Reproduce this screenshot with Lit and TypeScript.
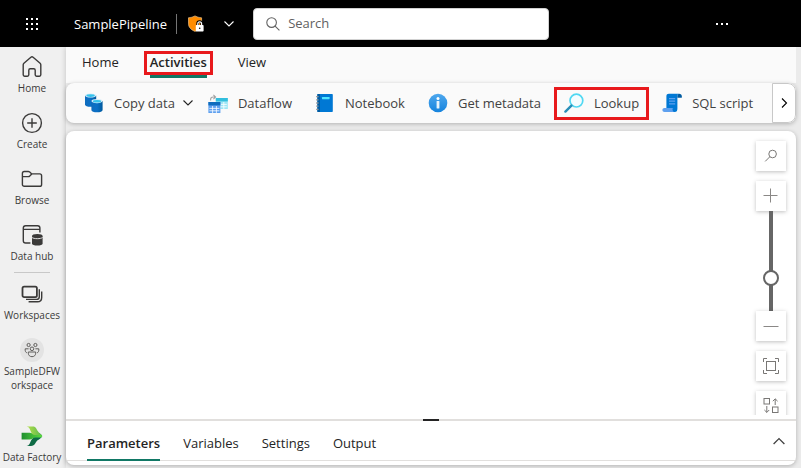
import { LitElement, html, css, svg, nothing } from "lit";
import { customElement, property, state } from "lit/decorators.js";
import { classMap } from "lit/directives/class-map.js";

const resets = css`
  * {
    box-sizing: border-box;
  }
  button {
    margin: 0;
    padding: 0;
    border: 0;
    background: none;
    color: inherit;
    font: inherit;
    cursor: pointer;
  }
  svg {
    display: block;
    flex: none;
  }
`;

const waffle = html`<svg width="14" height="14" viewBox="0 0 14 14" fill="#fff">
  ${[1, 6, 11].map((y) => [1, 6, 11].map((x) => svg`<rect x=${x} y=${y} width="2" height="2" />`))}
</svg>`;

const shield = html`<svg width="16" height="18" viewBox="0 0 16 18">
  <path d="M7 0.9C9 2 11 2.6 13.6 2.8V8.2C13.6 12 11.4 14.6 7 16.4C2.6 14.6 0.4 12 0.4 8.2V2.8C3 2.6 5 2 7 0.9Z" fill="#ff8c00" stroke="#fbd7a4" stroke-width="0.6" />
  <path d="M9.6 10V8.6a2 2 0 0 1 4 0V10" fill="none" stroke="#000" stroke-width="2.6" />
  <path d="M9.8 11V8.8a1.9 1.9 0 0 1 3.8 0V11" fill="none" stroke="#fff" stroke-width="1.2" />
  <rect x="7.8" y="10" width="7.8" height="6.6" rx="0.8" fill="#fff" />
  <circle cx="11.7" cy="13.2" r="0.8" fill="#000" />
</svg>`;

const chevron = (d: "down" | "up" | "right", size = 10) => {
  const paths = { down: "M0.5 2.5L5 7L9.5 2.5", up: "M0.5 7.5L5 3L9.5 7.5", right: "M3 0.5L7.5 5L3 9.5" };
  return html`<svg width=${size} height=${size} viewBox="0 0 10 10" fill="none" stroke="currentColor" stroke-width="1.1">
    <path d=${paths[d]} />
  </svg>`;
};

const searchGlyph = html`<svg width="14" height="14" viewBox="0 0 14 14" fill="none" stroke="#616161" stroke-width="1.1">
  <circle cx="5.6" cy="5.6" r="4.8" />
  <path d="M9.1 9.1L13.4 13.4" />
</svg>`;

const lineIcon = (body: unknown) => html`<svg width="22" height="22" viewBox="0 0 22 22" fill="none" stroke="#3b3a39" stroke-width="1.4" stroke-linejoin="round">
  ${body}
</svg>`;

const navIcons = {
  home: lineIcon(svg`<path d="M2.2 8.7C2.2 8.1 2.5 7.6 2.9 7.2L9.9 1.3C10.5 0.8 11.5 0.8 12.1 1.3L19.1 7.2C19.5 7.6 19.8 8.1 19.8 8.7V18.8C19.8 19.6 19.2 20.2 18.4 20.2H15.6C14.8 20.2 14.2 19.6 14.2 18.8V14.2C14.2 13.4 13.6 12.8 12.8 12.8H9.2C8.4 12.8 7.8 13.4 7.8 14.2V18.8C7.8 19.6 7.2 20.2 6.4 20.2H3.6C2.8 20.2 2.2 19.6 2.2 18.8Z" />`),
  create: lineIcon(svg`<circle cx="11" cy="11" r="9.4" /><path d="M11 6.2V15.8M6.2 11H15.8" />`),
  browse: lineIcon(svg`<path d="M1.4 5.4C1.4 4.3 2.2 3.5 3.3 3.5H7.3C7.8 3.5 8.3 3.7 8.7 4L10.8 5.9H18.7C19.8 5.9 20.6 6.7 20.6 7.8V16.4C20.6 17.5 19.8 18.3 18.7 18.3H3.3C2.2 18.3 1.4 17.5 1.4 16.4ZM1.4 8.6H7.4C7.9 8.6 8.3 8.4 8.7 8.1L10.8 5.9" />`),
  hub: lineIcon(svg`<path d="M9.4 19H4.6C3.3 19 2.3 18 2.3 16.7V4C2.3 2.7 3.3 1.7 4.6 1.7H16.6C17.9 1.7 18.9 2.7 18.9 4V8.4M2.3 5.4H18.9" />
    <path d="M11 12.2V19.4C11 20.7 13.4 21.6 16.3 21.6S21.6 20.7 21.6 19.4V12.2Z" fill="#3b3a39" stroke="none" />
    <ellipse cx="16.3" cy="12" rx="5.3" ry="2" fill="#3b3a39" stroke="none" />
    <path d="M11 13.4C12.5 15.1 20.1 15.1 21.6 13.4" stroke="#f0f0f0" stroke-width="0.9" />`),
  workspaces: lineIcon(svg`<rect x="1.5" y="3.6" width="14.4" height="10.6" rx="1.6" stroke-width="1.8" />
    <path d="M5 16.4H15.6C17.2 16.4 18.3 15.3 18.3 13.7V6.2M7.6 18.7H16.4C19 18.7 20.7 17 20.7 14.4V8.6" />`),
  team: html`<svg width="24" height="24" viewBox="0 0 24 24" fill="none" stroke="#605e5c" stroke-width="1">
    <circle cx="12" cy="12" r="12" fill="#e3e3e3" stroke="none" />
    <circle cx="8.6" cy="7" r="1.6" /><circle cx="15.4" cy="7" r="1.6" /><circle cx="12" cy="10.8" r="1.8" />
    <path d="M8.3 14H15.7V15.2C15.7 17.2 14.2 18.7 12 18.7S8.3 17.2 8.3 15.2ZM5.2 10.8H8.6M15.4 10.8H18.8M5.2 10.8C5 13 5.6 14.4 6.8 14.8M18.8 10.8C19 13 18.4 14.4 17.2 14.8" />
  </svg>`,
  factory: html`<svg width="22" height="20" viewBox="0 0 22 20">
    <defs>
      <linearGradient id="leaf" x1="0" x2="1"><stop offset="0" stop-color="#b5e04a" /><stop offset="1" stop-color="#5cb84e" /></linearGradient>
      <linearGradient id="stem" x1="0" x2="1"><stop offset="0" stop-color="#1f8f2f" /><stop offset="1" stop-color="#5ddb3f" /></linearGradient>
    </defs>
    <path d="M12 7H18.4L20.8 9.2C21.3 9.7 21.3 10.4 20.8 10.9L18 13.4H12Z" fill="#127a6b" />
    <path d="M5.6 20C8 19.8 8.6 18 9.6 15.6C10.6 13.2 11.6 11.4 14 11.4H20.2L17.6 13.6C15.6 15.2 15 16 14.2 17.6C13.4 19.2 12 20 10 20Z" fill="#0f6b45" />
    <path d="M0.6 6.8H8.6C11 6.8 12 8.2 14.4 8.2H19.6L20.8 9.2C21.3 9.7 21.3 10.4 20.8 10.9L20.2 11.4H14.4C12 11.4 11.4 13.4 8.6 13.4H0.6Z" fill="url(#stem)" />
    <path d="M5.6 0.4H11.4C13.6 0.4 14.6 1 15.4 2.8C16.2 4.6 17 5.6 19 7.6L20.6 9.1H15C11.6 9.1 10.4 7 9.4 4.4C8.6 2.4 7.8 0.6 5.6 0.4Z" fill="url(#leaf)" />
  </svg>`,
};

const color = (body: unknown) => html`<svg width="20" height="20" viewBox="0 0 20 20">${body}</svg>`;

const can = (x: number, y: number) => svg`
  <path d="M${x} ${y + 2}V${y + 11}C${x} ${y + 12.4} ${x + 2.5} ${y + 13.3} ${x + 5.6} ${y + 13.3}S${x + 11.2} ${y + 12.4} ${x + 11.2} ${y + 11}V${y + 2}Z" fill="url(#can)" />
  <ellipse cx=${x + 5.6} cy=${y + 2.1} rx="5.6" ry="2.1" fill="#d5ecf9" />
  <ellipse cx=${x + 5.6} cy=${y + 2.2} rx="4.2" ry="1.3" fill="#35c3ec" />`;

const grid = (x: number, y: number, head: string, body: string) => svg`
  <rect x=${x} y=${y} width="12" height="11" fill=${body} />
  <rect x=${x} y=${y} width="12" height="3.4" fill=${head} />
  <path d="M${x + 4.2} ${y + 4}V${y + 11}M${x + 8} ${y + 4}V${y + 11}M${x + 1} ${y + 6.4}H${x + 11}M${x + 1} ${y + 8.8}H${x + 11}" stroke="#fff" stroke-width="0.8" />`;

const toolIcons = {
  copy: color(svg`
    <defs><linearGradient id="can" x1="0" x2="1"><stop offset="0" stop-color="#0f6cbd" /><stop offset="0.5" stop-color="#0a6fc6" /><stop offset="1" stop-color="#005a9e" /></linearGradient></defs>
    ${can(1, 0.4)}
    ${can(7.4, 6)}`),
  dataflow: color(svg`
    ${grid(7.8, 5, "#32bedd", "#9be6f5")}
    ${grid(0.4, 9, "#0f6cbd", "#5ea0ef")}
    <path d="M2.6 7.4V6.4C2.6 4.8 3.6 4 5.2 4H7.4M5.4 1.8L7.6 4L5.4 6.2" fill="none" stroke="#a3a3a3" stroke-width="1.1" />`),
  notebook: color(svg`
    <rect x="2.4" y="1" width="15.4" height="18" rx="0.8" fill="#0078d4" />
    <rect x="2.4" y="1" width="2.6" height="18" fill="#005ba1" />
    <rect x="7" y="4" width="7.6" height="2.2" rx="0.4" fill="#50e6ff" />
    <path d="M1.2 3.6H3.6M1.2 6.8H3.6M1.2 10H3.6M1.2 13.2H3.6M1.2 16.4H3.6" stroke="#8a9299" stroke-width="1.3" />`),
  info: color(svg`
    <defs><linearGradient id="info" x2="0" y2="1"><stop offset="0" stop-color="#4fa8ee" /><stop offset="1" stop-color="#1583dd" /></linearGradient></defs>
    <circle cx="10" cy="10" r="9.3" fill="url(#info)" />
    <circle cx="10" cy="5.6" r="1.5" fill="#fff" />
    <rect x="8.6" y="8" width="2.8" height="7.6" rx="0.6" fill="#e8f4fd" />`),
  lookup: color(svg`
    <circle cx="12.4" cy="7.6" r="6.4" fill="#f4fdff" stroke="#50d8f2" stroke-width="1.7" />
    <path d="M7.4 12.6L1.4 18.6" stroke="#2a8fb8" stroke-width="2.4" stroke-linecap="round" />`),
  script: color(svg`
    <path d="M4.4 17V3.2C4.4 1.6 5.4 0.8 6.8 0.8H17.2C15.8 1 15.4 2 15.4 3.4V15.4C15.4 17.6 14.6 19 12.8 19H4Z" fill="#0078d4" />
    <path d="M17.2 0.8C18.8 0.8 19.8 1.8 19.8 3.2V4.8H15.4V3.2C15.4 1.8 16 0.8 17.2 0.8Z" fill="#005ba1" />
    <path d="M7 5.6H13.2M7 8.2H13.2M7 10.8H13.2" stroke="#5ea0ef" stroke-width="1.2" />
    <path d="M2.6 15H11.6C10.4 15.4 10.4 16 10.6 17C10.8 18.2 11.4 19 12.8 19H2.6C1.2 19 0.4 18.2 0.4 17S1.2 15 2.6 15Z" fill="#5ea0ef" />`),
};

const thin = (body: unknown) => html`<svg width="16" height="16" viewBox="0 0 16 16" fill="none" stroke="#797775" stroke-width="1">${body}</svg>`;

const canvasIcons = {
  find: thin(svg`<circle cx="9.6" cy="6" r="3.8" /><path d="M6.9 8.7L2.2 13.4" />`),
  plus: thin(svg`<path d="M7.5 0.5V14.5M0.5 7.5H14.5" stroke="#8a8886" />`),
  minus: thin(svg`<path d="M0.5 8.5H15.5" stroke="#8a8886" />`),
  fit: thin(svg`<rect x="3.5" y="3.5" width="9" height="9" /><path d="M0.5 4V0.5H4M12 0.5H15.5V4M15.5 12V15.5H12M4 15.5H0.5V12" />`),
  arrange: thin(svg`<rect x="1" y="0.5" width="5.5" height="5.5" /><rect x="9.5" y="9" width="5.5" height="5.5" />
    <path d="M12.2 7V1M9.8 3.2L12.2 0.8L14.6 3.2M3.8 8V14.4M1.4 12L3.8 14.4L6.2 12" />`),
};

@customElement("app-header")
class AppHeader extends LitElement {
  static styles = [
    resets,
    css`
      :host {
        display: flex;
        align-items: center;
        height: 47px;
        padding: 0 25px;
        background: #000;
        color: #fff;
      }
      .title {
        margin-left: 35px;
        padding-right: 9px;
        border-right: 1px solid #757575;
        font-size: 13px;
        line-height: 20px;
      }
      .label {
        margin-left: 11px;
      }
      .menu {
        margin-left: 20px;
        margin-right: 19px;
      }
      .search {
        display: flex;
        align-items: center;
        gap: 8px;
        flex: 0 1 296px;
        height: 32px;
        padding: 0 12px;
        border: 1px solid #d1d1d1;
        border-radius: 4px;
        background: #fff;
      }
      .search input {
        flex: 1;
        min-width: 0;
        border: 0;
        outline: 0;
        background: none;
        padding: 0 0 2px;
        font: inherit;
        font-size: 13px;
      }
      .search input::placeholder {
        color: #616161;
      }
      .more {
        margin-left: auto;
        margin-right: 47px;
      }
    `,
  ];

  render() {
    return html`
      <button aria-label="App launcher">${waffle}</button>
      <span class="title">SamplePipeline</span>
      <button class="label" aria-label="Sensitivity label">${shield}</button>
      <button class="menu" aria-label="Pipeline menu">${chevron("down")}</button>
      <label class="search">${searchGlyph}<input type="search" placeholder="Search" aria-label="Search" /></label>
      <button class="more" aria-label="More options">
        <svg width="14" height="4" viewBox="0 0 14 4" fill="#fff">
          <rect x="1" y="1" width="2" height="2" /><rect x="6" y="1" width="2" height="2" /><rect x="11" y="1" width="2" height="2" />
        </svg>
      </button>
    `;
  }
}

@customElement("side-nav")
class SideNav extends LitElement {
  static styles = [
    resets,
    css`
      :host {
        display: flex;
        flex-direction: column;
        padding: 6px 2px 0 0;
        background: #f0f0f0;
        color: #3b3a39;
        font-size: 10px;
        line-height: 14px;
        overflow: hidden;
      }
      a {
        display: flex;
        flex-direction: column;
        align-items: center;
        gap: 2px;
        min-height: 56px;
        padding: 2px 0;
        color: inherit;
        text-align: center;
        text-decoration: none;
      }
      .icon {
        display: grid;
        place-items: center;
        height: 24px;
      }
      hr {
        width: 36px;
        height: 1px;
        margin: -5px auto 7px;
        border: 0;
        background: #c8c8c8;
      }
      .last {
        margin-top: auto;
        min-height: 46px;
      }
    `,
  ];

  private item(icon: unknown, label: unknown, last = false) {
    return html`<a href="#" class=${classMap({ last })}>
      <span class="icon">${icon}</span><span>${label}</span>
    </a>`;
  }

  render() {
    return html`
      ${this.item(navIcons.home, "Home")} ${this.item(navIcons.create, "Create")}
      ${this.item(navIcons.browse, "Browse")} ${this.item(navIcons.hub, "Data hub")}
      <hr />
      ${this.item(navIcons.workspaces, "Workspaces")}
      ${this.item(navIcons.team, html`SampleDFW<wbr />orkspace`)}
      ${this.item(navIcons.factory, "Data Factory", true)}
    `;
  }
}

@customElement("tab-strip")
class TabStrip extends LitElement {
  @property({ type: Array }) tabs: string[] = [];
  @property() selected = "";
  @property() marked = "";

  static styles = [
    resets,
    css`
      :host {
        display: flex;
        align-items: flex-start;
        font-size: 13px;
        line-height: 18px;
        color: #242424;
      }
      [role="tablist"] {
        display: flex;
        gap: var(--tab-gap);
      }
      button {
        position: relative;
        padding: var(--tab-pad);
        border-bottom: var(--tab-line) solid transparent;
      }
      .selected {
        border-color: #117865;
        font-weight: 600;
      }
      .marked::after {
        content: "";
        position: absolute;
        inset: 4px -6px 0;
        border: 3px solid #e8191c;
      }
    `,
  ];

  render() {
    return html`<div role="tablist">
      ${this.tabs.map(
        (t) => html`<button
          role="tab"
          aria-selected=${t === this.selected}
          class=${classMap({ selected: t === this.selected, marked: t === this.marked })}
          @click=${() => (this.selected = t)}
        >
          ${t}
        </button>`,
      )}
    </div>`;
  }
}

interface Tool {
  icon: unknown;
  label: string;
  menu?: boolean;
  marked?: boolean;
}

@customElement("activity-bar")
class ActivityBar extends LitElement {
  private tools: Tool[] = [
    { icon: toolIcons.copy, label: "Copy data", menu: true },
    { icon: toolIcons.dataflow, label: "Dataflow" },
    { icon: toolIcons.notebook, label: "Notebook" },
    { icon: toolIcons.info, label: "Get metadata" },
    { icon: toolIcons.lookup, label: "Lookup", marked: true },
    { icon: toolIcons.script, label: "SQL script" },
  ];

  static styles = [
    resets,
    css`
      :host {
        display: flex;
        height: 40px;
        border-radius: 8px;
        background: #fafafa;
        box-shadow: 0 1px 4px rgba(0, 0, 0, 0.25);
        overflow: hidden;
        font-size: 13px;
        line-height: 18px;
        color: #424242;
      }
      .tools {
        display: flex;
        align-items: center;
        flex: 1;
        min-width: 0;
        gap: 3px;
        padding-left: 8px;
        overflow: hidden;
      }
      .tool {
        position: relative;
        display: flex;
        align-items: center;
        gap: 10px;
        flex: none;
        height: 33px;
        padding: 0 10px;
        white-space: nowrap;
      }
      .menu {
        padding-right: 2px;
      }
      .menu .chev {
        margin-left: -2px;
        color: #242424;
      }
      .marked::after {
        content: "";
        position: absolute;
        inset: 0;
        border: 3px solid #e8191c;
      }
      .next {
        display: grid;
        place-items: center;
        width: 24px;
        border: 1px solid #c8c8c8;
        border-radius: 0 8px 8px 0;
        background: #fff;
        color: #000;
      }
    `,
  ];

  render() {
    return html`
      <div class="tools">
        ${this.tools.map(
          (t) => html`<button class=${classMap({ tool: true, menu: !!t.menu, marked: !!t.marked })}>
            ${t.icon}<span>${t.label}</span>${t.menu ? html`<span class="chev">${chevron("down")}</span>` : nothing}
          </button>`,
        )}
      </div>
      <button class="next" aria-label="Scroll right">${chevron("right")}</button>
    `;
  }
}

@customElement("canvas-controls")
class CanvasControls extends LitElement {
  @state() private zoom = 30;

  static styles = [
    resets,
    css`
      :host {
        display: flex;
        flex-direction: column;
        align-items: center;
        gap: 10px;
      }
      .zoom {
        display: flex;
        flex-direction: column;
        align-items: center;
      }
      button {
        display: grid;
        place-items: center;
        flex: none;
        width: 30px;
        height: 30px;
        background: #fff;
        box-shadow: 0 1px 4px rgba(0, 0, 0, 0.25);
      }
      input {
        appearance: none;
        writing-mode: vertical-lr;
        direction: rtl;
        width: 16px;
        height: 100px;
        margin: 0;
        background: linear-gradient(#666, #666) center / 4px 100% no-repeat;
      }
      input::-webkit-slider-thumb {
        appearance: none;
        width: 16px;
        height: 16px;
        border: 2px solid #666;
        border-radius: 50%;
        background: #fff;
      }
    `,
  ];

  render() {
    return html`
      <button aria-label="Find">${canvasIcons.find}</button>
      <div class="zoom">
        <button aria-label="Zoom in">${canvasIcons.plus}</button>
        <input
          type="range"
          aria-label="Zoom level"
          .value=${String(this.zoom)}
          @input=${(e: Event) => (this.zoom = Number((e.target as HTMLInputElement).value))}
        />
        <button aria-label="Zoom out">${canvasIcons.minus}</button>
      </div>
      <button aria-label="Zoom to fit">${canvasIcons.fit}</button>
      <button aria-label="Auto align">${canvasIcons.arrange}</button>
    `;
  }
}

@customElement("app-root")
class AppRoot extends LitElement {
  static styles = [
    resets,
    css`
      :host {
        display: grid;
        grid-template: auto minmax(0, 1fr) / 66px minmax(0, 1fr);
        height: 100vh;
        background: #ebebeb;
        font-family: "Open Sans", "Noto Sans", sans-serif;
      }
      app-header {
        grid-column: 1 / -1;
      }
      main {
        display: flex;
        flex-direction: column;
        min-width: 0;
        padding: 0 5px 3px 0;
        box-shadow: 0 0 6px rgba(0, 0, 0, 0.2);
        clip-path: inset(0 0 0 -6px);
      }
      .ribbon {
        --tab-gap: 31px;
        --tab-pad: 6px 0 4px;
        --tab-line: 3px;
        height: 36px;
        padding: 0 16px;
        background: #fafafa;
      }
      .work {
        display: flex;
        flex-direction: column;
        flex: 1;
        min-height: 0;
        margin-top: 8px;
        border-radius: 8px;
        background: #fff;
        box-shadow: 0 1px 4px rgba(0, 0, 0, 0.25);
        overflow: hidden;
      }
      .canvas {
        display: flex;
        justify-content: flex-end;
        flex: 1;
        min-height: 0;
        margin-bottom: 4px;
        padding: 10px 10px 0;
        overflow: hidden;
      }
      .splitter {
        display: flex;
        justify-content: center;
        height: 2px;
        background: #e1dfdd;
      }
      .grip {
        width: 16px;
        background: #242424;
      }
      .panel {
        --tab-gap: 23px;
        --tab-pad: 13px 0 7px;
        --tab-line: 2px;
        display: flex;
        align-items: flex-start;
        justify-content: space-between;
        height: 40px;
        margin-bottom: 4px;
        padding: 0 11px 0 21px;
        border-bottom: 1px solid #e1dfdd;
      }
      .collapse {
        align-self: center;
        color: #424242;
      }
    `,
  ];

  render() {
    return html`
      <app-header></app-header>
      <side-nav></side-nav>
      <main>
        <tab-strip class="ribbon" .tabs=${["Home", "Activities", "View"]} selected="Activities" marked="Activities"></tab-strip>
        <activity-bar></activity-bar>
        <section class="work">
          <div class="canvas"><canvas-controls></canvas-controls></div>
          <div class="splitter"><span class="grip"></span></div>
          <div class="panel">
            <tab-strip .tabs=${["Parameters", "Variables", "Settings", "Output"]} selected="Parameters"></tab-strip>
            <button class="collapse" aria-label="Collapse panel">${chevron("up", 12)}</button>
          </div>
        </section>
      </main>
    `;
  }
}
